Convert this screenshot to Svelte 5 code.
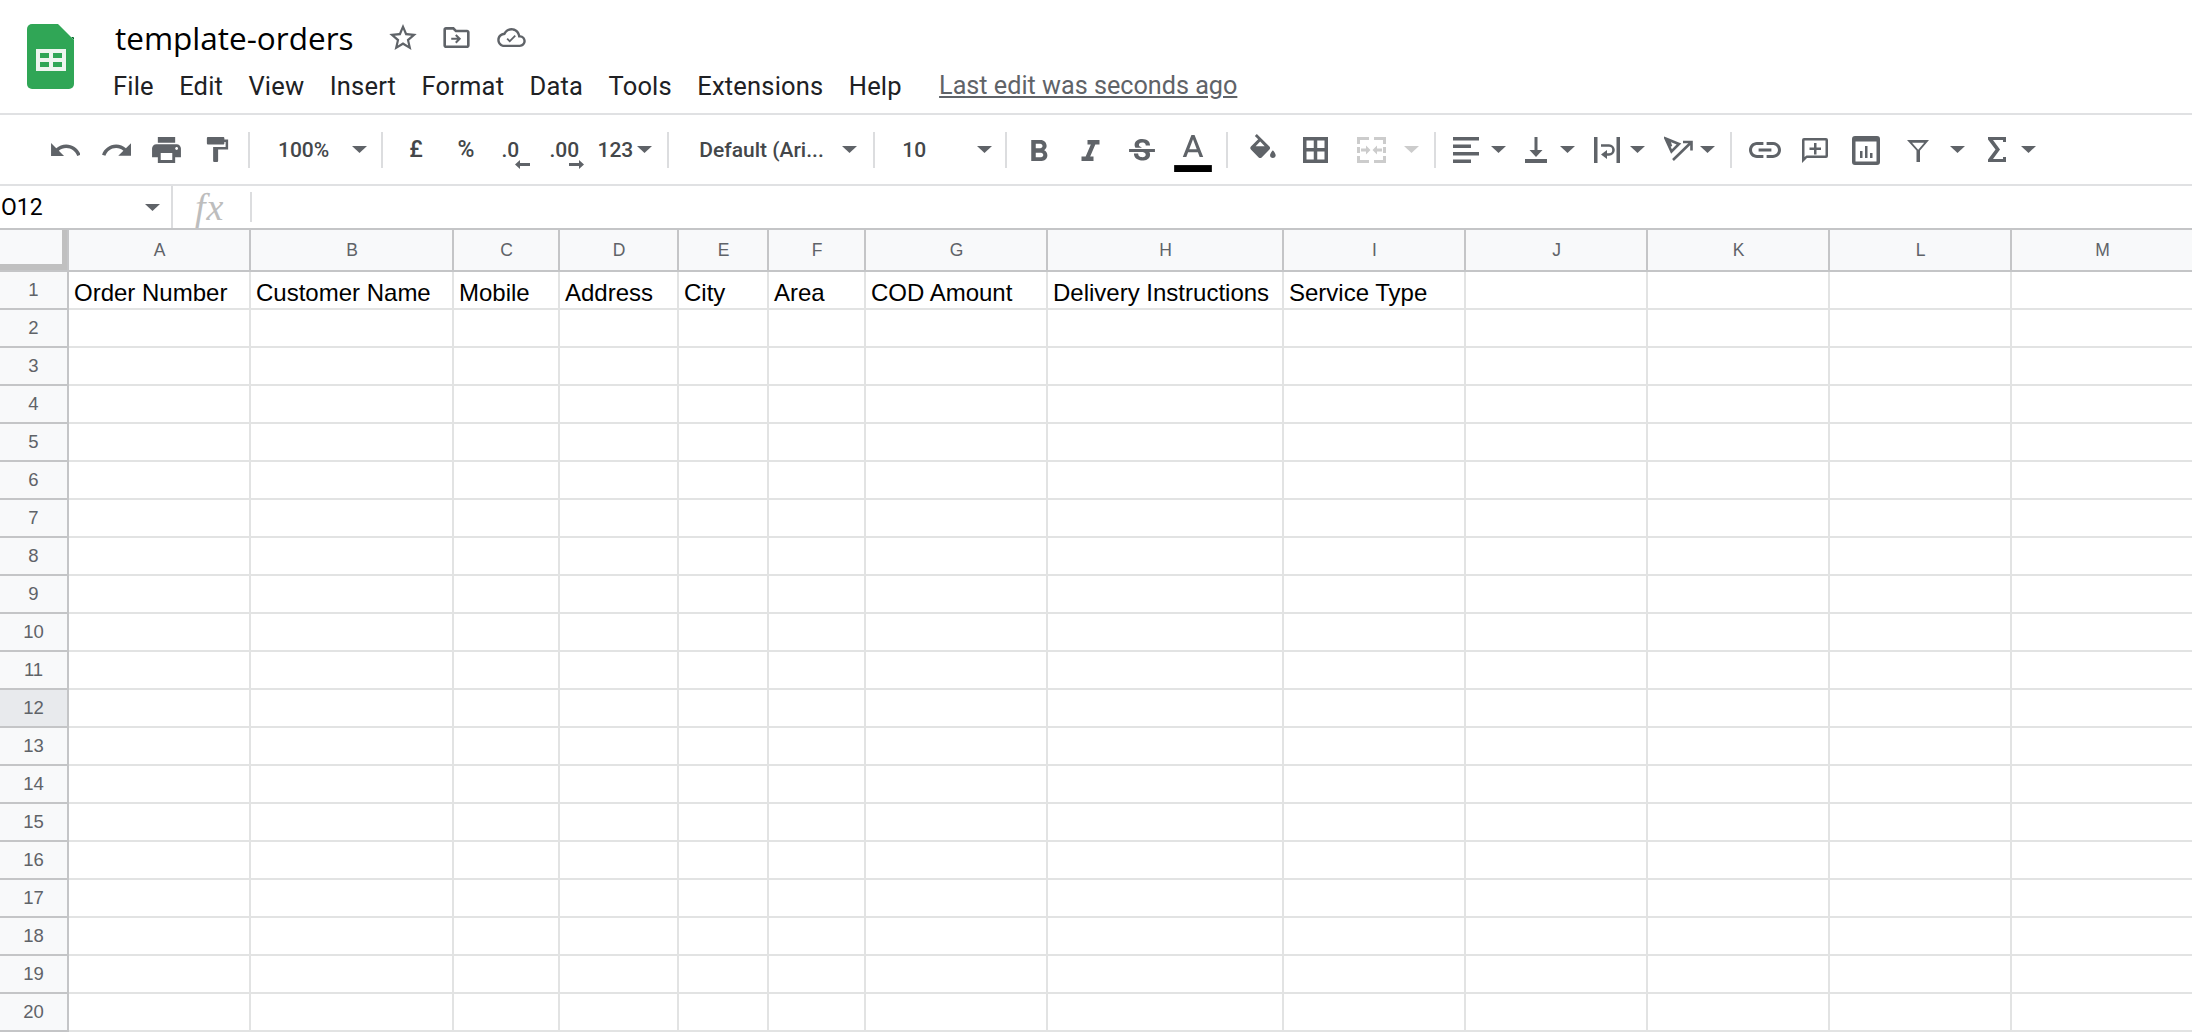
<script>
  const icons = {
    star: { vb: '2 2 20 19', w: 28, h: 26, d: 'M22 9.24l-7.19-.62L12 2 9.19 8.63 2 9.24l5.46 4.73L5.82 21 12 17.27 18.18 21l-1.63-7.03L22 9.24zM12 15.4l-3.76 2.27 1-4.28-3.32-2.88 4.38-.38L12 6.1l1.71 4.04 4.38.38-3.32 2.88 1 4.28L12 15.4z' },
    folder: { vb: '2 4 20 16', w: 27, h: 21, d: 'M20 6h-8l-2-2H4c-1.1 0-2 .9-2 2v12c0 1.1.9 2 2 2h16c1.1 0 2-.9 2-2V8c0-1.1-.9-2-2-2zm0 12H4V6h5.17l2 2H20v10zM12 9.5l-1.1 1.1 1.6 1.6H8v1.6h4.5l-1.6 1.6L12 16.5l3.5-3.5z' },
    cloud: { vb: '0 4 24 16', w: 29, h: 19, d: 'M19.35 10.04C18.67 6.59 15.64 4 12 4 9.11 4 6.6 5.64 5.35 8.04 2.34 8.36 0 10.91 0 14c0 3.31 2.69 6 6 6h13c2.76 0 5-2.24 5-5 0-2.64-2.05-4.78-4.65-4.96zM19 18H6c-2.21 0-4-1.79-4-4 0-2.05 1.53-3.76 3.56-3.97l1.07-.11.5-.95C8.08 7.14 9.94 6 12 6c2.62 0 4.88 1.86 5.39 4.43l.3 1.5 1.53.11c1.56.1 2.78 1.41 2.78 2.96 0 1.65-1.35 3-3 3zM10.5 16.2L7.8 13.5l1.06-1.06 1.64 1.64 4.14-4.14 1.06 1.06z' },
    undo: { vb: '2 7 20 9', w: 29, h: 13, d: 'M12.5 8c-2.65 0-5.05.99-6.9 2.6L2 7v9h9l-3.62-3.62c1.39-1.16 3.16-1.88 5.12-1.88 3.54 0 6.55 2.31 7.6 5.5l2.37-.78C21.08 11.03 17.15 8 12.5 8z' },
    redo: { vb: '1.5 7 20.5 9', w: 29, h: 13, d: 'M18.4 10.6C16.55 8.99 14.15 8 11.5 8c-4.65 0-8.58 3.03-9.96 7.22L3.9 16c1.05-3.19 4.05-5.5 7.6-5.5 1.95 0 3.73.72 5.12 1.88L13 16h9V7l-3.6 3.6z' },
    print: { vb: '2 3 20 18', w: 29, h: 26, d: 'M19 8H5c-1.66 0-3 1.34-3 3v6h4v4h12v-4h4v-6c0-1.66-1.34-3-3-3zm-3 11H8v-5h8v5zm3-7c-.55 0-1-.45-1-1s.45-1 1-1 1 .45 1 1-.45 1-1 1zm-1-9H6v4h12V3z' },
    paint: { vb: '4 2 17 20', w: 23, h: 25, d: 'M18 4V3c0-.55-.45-1-1-1H5c-.55 0-1 .45-1 1v4c0 .55.45 1 1 1h12c.55 0 1-.45 1-1V6h1v4H9v11c0 .55.45 1 1 1h2c.55 0 1-.45 1-1v-9h8V4h-3z' },
    bold: { vb: '7 4 11 14', w: 17, h: 21, dy: 1, d: 'M15.6 10.79c.97-.67 1.65-1.77 1.65-2.79 0-2.26-1.75-4-4-4H7v14h7.04c2.09 0 3.71-1.7 3.71-3.79 0-1.52-.86-2.82-2.15-3.42zM10 6.5h3c.83 0 1.5.67 1.5 1.5s-.67 1.5-1.5 1.5h-3v-3zm3.5 9H10v-3h3.5c.83 0 1.5.67 1.5 1.5s-.67 1.5-1.5 1.5z' },
    italic: { vb: '6 4 12 14', w: 21, h: 21, dy: 1, d: 'M10 4v3h2.21l-3.42 8H6v3h8v-3h-2.21l3.42-8H18V4z' },
    strike: { vb: '3 3 18 16', w: 26, h: 23, dy: 1, d: 'M6.85 7.08C6.85 4.37 9.45 3 12.24 3c1.64 0 3 .49 3.9 1.28.77.65 1.46 1.73 1.46 3.24h-3.01c0-.31-.05-.59-.15-.85-.29-.86-1.2-1.28-2.25-1.28-1.86 0-2.34 1.02-2.34 1.7 0 .48.25.88.74 1.21.38.25.77.48 1.41.7H7.39c-.21-.34-.54-.89-.54-1.92zM21 12v-2H3v2h9.62c1.15.45 1.96.75 1.96 1.97 0 1-.81 1.67-2.28 1.67-1.54 0-2.93-.54-2.93-2.51H6.4c0 .55.08 1.13.24 1.58.81 2.29 3.29 3.3 5.67 3.3 2.27 0 5.3-.89 5.3-4.05 0-.3-.01-1.16-.48-1.96H21z' },
    fill: { vb: '3 0 18 17', w: 26, h: 24, dy: -4, d: 'M16.56 8.94L7.62 0 6.21 1.41l2.38 2.38-5.15 5.15c-.59.59-.59 1.54 0 2.12l5.5 5.5c.29.29.68.44 1.06.44s.77-.15 1.06-.44l5.5-5.5c.59-.58.59-1.53 0-2.12zM6.8 8.6L10 5.4 13.2 8.6H6.8zM19 11.5s-2 2.17-2 3.5c0 1.1.9 2 2 2s2-.9 2-2c0-1.33-2-3.5-2-3.5z' },
    borders: { vb: '0 0 25 26', w: 25, h: 26, d: 'M0 0h25v26H0zM3.5 3.5v7.5h7.25V3.5zM14.25 3.5v7.5h7.25V3.5zM3.5 14.5v8h7.25v-8zM14.25 14.5v8h7.25v-8z' },
    merge: { vb: '0 0 29 26', w: 29, h: 26, dy: 0.5, off: true, d: 'M0 0h12v3H0zM0 3h3v4H0zM0 10h3v6H0zM0 19h3v4H0zM0 23h12v3H0zM17 0h12v3H17zM26 3h3v4h-3zM26 10h3v6h-3zM26 19h3v4h-3zM17 23h12v3H17zM4 11.5h5v-3l4.5 4.5L9 17.5v-3H4zM25 11.5h-5v-3L15.5 13l4.5 4.5v-3h5z' },
    align: { vb: '0 0 26 26', w: 26, h: 26, d: 'M0 0h26v3.5H0zM0 7.5h18V11H0zM0 15h26v3.5H0zM0 22.5h18V26H0z' },
    valign: { vb: '0 0 22 26', w: 22, h: 26, d: 'M0 22h22v4H0zM9.5 0h3v13h5l-6.5 7-6.5-7h5z' },
    link: { vb: '2 7 20 10', w: 32, h: 16, d: 'M3.9 12c0-1.71 1.39-3.1 3.1-3.1h4V7H7c-2.76 0-5 2.24-5 5s2.24 5 5 5h4v-1.9H7c-1.71 0-3.1-1.39-3.1-3.1zM8 13h8v-2H8v2zm9-6h-4v1.9h4c1.71 0 3.1 1.39 3.1 3.1s-1.39 3.1-3.1 3.1h-4V17h4c2.76 0 5-2.24 5-5s-2.24-5-5-5z' },
    comment: { vb: '0 0 26 25', w: 26, h: 25, dy: 0.5, d: 'M2 0h22a2 2 0 0 1 2 2v16a2 2 0 0 1-2 2H5l-5 5V2a2 2 0 0 1 2-2zM2.5 2.5V19l2-1.5h19v-15zM12 5h2.5v4.5H19V12h-4.5v4.5H12V12H7.5V9.5H12z' },
    chart: { vb: '0 0 28 29', w: 28, h: 29, dy: 1, d: 'M3 0h22a3 3 0 0 1 3 3v23a3 3 0 0 1-3 3H3a3 3 0 0 1-3-3V3a3 3 0 0 1 3-3zM3.5 5.5v20h21v-20zM8 15h2.5v7H8zM13 10h2.5v12H13zM18 17h2.5v5H18z' },
    filter: { vb: '0 0 22 22', w: 22, h: 22, dy: 1, d: 'M0 0h22L13 10.5V22H9.5V10.5zM5 2.8l6.2 7 6-7z' },
    sigma: { vb: '0 0 18 25', w: 18, h: 25, d: 'M0 0h18v5h-3V3H5l7 9.5L5 22h10v-2h3v5H0v-2.5L7.5 12.5 0 2.5z' }
  };

  const menus = ['File', 'Edit', 'View', 'Insert', 'Format', 'Data', 'Tools', 'Extensions', 'Help'];
  const columns = [
    ['A', 'Order Number'], ['B', 'Customer Name'], ['C', 'Mobile'], ['D', 'Address'], ['E', 'City'],
    ['F', 'Area'], ['G', 'COD Amount'], ['H', 'Delivery Instructions'], ['I', 'Service Type'],
    ['J', ''], ['K', ''], ['L', ''], ['M', '']
  ];
  const rows = Array.from({ length: 20 }, (_, i) => i + 1);
</script>

{#snippet icon(name)}
  {@const ic = icons[name]}
  <svg class:off={ic.off} viewBox={ic.vb} width={ic.w} height={ic.h} style="margin-top:{(ic.dy ?? 0) * 2}px">
    <path fill-rule="evenodd" d={ic.d} />
  </svg>
{/snippet}

{#snippet btn(name, w, ml = 0)}
  <div class="btn" style="width:{w}px;margin-left:{ml}px">{@render icon(name)}</div>
{/snippet}

{#snippet caret(ml = 0, off = false)}
  <svg class="caret" class:off viewBox="0 0 15 7" width="15" height="7" style="margin-left:{ml}px"><path d="M0 0h15L7.5 7z" /></svg>
{/snippet}

<div class="page">
  <header class="top">
    <svg class="logo" viewBox="0 0 47 65" width="47" height="65">
      <defs>
        <pattern id="dots" width="2" height="2" patternUnits="userSpaceOnUse">
          <rect width="2" height="2" fill="#2fa55a" />
          <rect width="1" height="1" fill="#14532d" />
          <rect x="1" y="1" width="1" height="1" fill="#14532d" />
        </pattern>
      </defs>
      <path fill="#30a656" d="M0 5a5 5 0 0 1 5-5h26l16 16v44a5 5 0 0 1-5 5H5a5 5 0 0 1-5-5z" />
      <path fill="url(#dots)" d="M31 0l16 16v-3H31z M31 0v13h13z" />
      <rect x="9" y="25" width="30" height="22" fill="#eef5ef" />
      <g fill="#30a656">
        <rect x="13" y="29" width="9" height="5" />
        <rect x="26" y="29" width="9" height="5" />
        <rect x="13" y="38" width="9" height="5" />
        <rect x="26" y="38" width="9" height="5" />
      </g>
    </svg>
    <div class="doc">
      <div class="title-row">
        <span class="title">template-orders</span>
        <span class="doc-icon star">{@render icon('star')}</span>
        <span class="doc-icon folder">{@render icon('folder')}</span>
        <span class="doc-icon cloud">{@render icon('cloud')}</span>
      </div>
      <nav class="menu">
        {#each menus as m}
          <span>{m}</span>
        {/each}
        <span class="last-edit">Last edit was seconds ago</span>
      </nav>
    </div>
  </header>

  <div class="toolbar">
    {@render btn('undo', 51, 40)}
    {@render btn('redo', 50)}
    {@render btn('print', 51)}
    {@render btn('paint', 51)}
    <div class="sep" style="margin-left:5px"></div>

    <div class="select zoom"><span>100%</span>{@render caret()}</div>
    <div class="sep"></div>

    <div class="btn txt sym" style="width:50px;margin-left:8px">£</div>
    <div class="btn txt sym" style="width:50px">%</div>
    <div class="dec dec-less">
      <span>.0</span>
      <svg viewBox="0 0 15 9" width="15" height="9"><path d="M0 4.5L5 0v3h10v3H5v3z" /></svg>
    </div>
    <div class="dec dec-more">
      <span>.00</span>
      <svg viewBox="0 0 15 9" width="15" height="9"><path d="M15 4.5L10 0v3H0v3h10v3z" /></svg>
    </div>
    <span class="txt num-format">123</span>{@render caret(4)}
    <div class="sep" style="margin-left:15px"></div>

    <div class="select font"><span>Default (Ari...</span>{@render caret()}</div>
    <div class="sep"></div>
    <div class="select size"><span>10</span>{@render caret()}</div>
    <div class="sep"></div>

    {@render btn('bold', 51, 7)}
    {@render btn('italic', 51)}
    {@render btn('strike', 51)}
    <div class="btn" style="width:51px">
      <svg class="text-color" viewBox="0 -1.5 24 28" width="38" height="44">
        <path d="M11 3L5.5 17h2.25l1.12-3h6.25l1.12 3h2.25L13 3h-2zm-1.38 9L12 5.67 14.38 12H9.62z" />
        <rect class="swatch" x="0" y="22.1" width="24" height="4.5" />
      </svg>
    </div>
    <div class="sep" style="margin-left:8px"></div>

    {@render btn('fill', 52, 9)}
    {@render btn('borders', 53)}
    {@render btn('merge', 59)}
    {@render caret(3, true)}
    <div class="sep" style="margin-left:15px"></div>

    {@render btn('align', 49, 5.5)}
    {@render caret()}
    {@render btn('valign', 48, 6.5)}
    {@render caret()}
    <div class="btn" style="width:46px;margin-left:9px">
      <svg class="line-icon" viewBox="0 0 26 26" width="26" height="26">
        <path class="solid" d="M0 0h3.5v26H0zM22.5 0H26v26h-3.5z" />
        <path d="M7 8.5h8a4.5 4.5 0 0 1 0 9h-3" />
        <path class="solid" d="M13 13l-6 4.5 6 4.5z" />
      </svg>
    </div>
    {@render caret()}
    <div class="btn" style="width:43px;margin-left:12px">
      <svg class="line-icon" viewBox="0 0 29 26" width="29" height="26" style="margin-top:-2px">
        <path d="M1.5 2.5L15 8l-7.5 7.5zM5 4.5l2 6" />
        <path d="M9 24L27 6.5M19 6h8.5v8.5" />
      </svg>
    </div>
    {@render caret()}
    <div class="sep" style="margin-left:15px"></div>

    {@render btn('link', 52, 7)}
    {@render btn('comment', 48)}
    {@render btn('chart', 54)}
    {@render btn('filter', 50)}
    {@render caret(7)}
    {@render btn('sigma', 48, 8)}
    {@render caret()}
  </div>

  <div class="formula">
    <div class="name-box"><span>O12</span>{@render caret()}</div>
    <div class="fx">fx</div>
    <div class="fx-sep"></div>
  </div>

  <div class="sheet">
    <div class="corner"></div>
    {#each columns as col}
      <div class="col-head">{col[0]}</div>
    {/each}
    {#each rows as r}
      <div class="row-head" class:current={r === 12}>{r}</div>
      {#each columns as col}
        <div class="cell">{r === 1 ? col[1] : ''}</div>
      {/each}
    {/each}
  </div>
</div>

<style>
  :global(body) {
    margin: 0;
    background: #fff;
    overflow: hidden;
  }

  .page {
    width: 2192px;
    height: 1033px;
    overflow: hidden;
    font-family: Roboto, 'Liberation Sans', sans-serif;
  }

  /* title + menus */
  .top {
    display: flex;
    height: 113px;
    border-bottom: 2px solid #e0e1e3;
    box-sizing: content-box;
  }

  .logo {
    margin: 24px 0 0 27px;
    flex: none;
  }

  .doc {
    margin-left: 39px;
  }

  .title-row {
    display: flex;
    align-items: center;
    height: 40px;
    margin-top: 17px;
    margin-left: 2px;
  }

  .title {
    font-family: 'Open Sans', sans-serif;
    font-size: 31.5px;
    color: #000;
  }

  .doc-icon {
    display: flex;
    fill: #5f6368;
  }

  .star { margin-left: 35px; }
  .folder { margin-left: 26px; }
  .cloud { margin-left: 27px; }

  .menu {
    display: flex;
    gap: 25.3px;
    margin-top: 13px;
    font-size: 25.5px;
    letter-spacing: 0.2px;
    line-height: 32px;
    color: #202124;
  }

  .last-edit {
    margin-left: 12px;
    font-size: 25.2px;
    letter-spacing: 0;
    color: #5f6368;
    text-decoration: underline;
  }

  /* toolbar */
  .toolbar {
    display: flex;
    align-items: center;
    height: 69px;
    border-bottom: 2px solid #e0e1e3;
    fill: #5f6368;
    font-size: 21px;
    color: #44474a;
    white-space: nowrap;
  }

  .btn {
    display: flex;
    flex: none;
    align-items: center;
    justify-content: center;
  }

  .off path {
    fill: #ccc;
  }

  .caret {
    flex: none;
  }

  .sep {
    flex: none;
    width: 2px;
    height: 36px;
    background: #dcdddf;
  }

  .select {
    display: flex;
    flex: none;
    align-items: center;
    justify-content: space-between;
    box-sizing: border-box;
    font-weight: 500;
  }

  .zoom { width: 131px; padding: 0 14px 0 28px; }
  .font { width: 204px; padding: 0 16px 0 30px; }
  .size { width: 130px; padding: 0 13px 0 27px; }

  .txt {
    font-weight: 500;
  }

  .sym {
    font-size: 23px;
  }

  .dec {
    display: flex;
    flex: none;
    flex-direction: column;
    align-items: flex-start;
    box-sizing: border-box;
    width: 50px;
    padding-top: 24px;
    height: 69px;
    font-weight: 500;
    line-height: 22px;
  }

  .dec svg {
    margin-top: -1px;
  }

  .dec-less { padding-left: 10.5px; }
  .dec-less svg { margin-left: 13px; }
  .dec-more { padding-left: 8.5px; }
  .dec-more svg { margin-left: 19px; }

  .num-format {
    margin-left: 6.5px;
  }

  .text-color .swatch {
    fill: #000;
  }

  .line-icon path {
    fill: none;
    stroke: #5f6368;
    stroke-width: 2.6;
  }

  .line-icon path.solid {
    fill: #5f6368;
    stroke: none;
  }

  /* formula bar */
  .formula {
    display: flex;
    align-items: center;
    height: 42px;
    fill: #5f6368;
  }

  .name-box {
    display: flex;
    flex: none;
    align-items: center;
    justify-content: space-between;
    box-sizing: border-box;
    width: 173px;
    height: 100%;
    padding: 0 11px 0 1px;
    border-right: 2px solid #dcdddf;
    font-size: 23px;
    color: #000;
  }

  .fx {
    flex: none;
    width: 77px;
    padding-left: 22px;
    box-sizing: border-box;
    font: italic 38px/42px 'Liberation Serif', serif;
    letter-spacing: 1px;
    color: #bdbdbd;
  }

  .fx-sep {
    width: 2px;
    height: 30px;
    background: #dcdddf;
  }

  /* grid */
  .sheet {
    display: grid;
    grid-template-columns: 69px 182px 203px 106px 119px 90px 97px 182px 236px 182px 182px 182px 182px 182px;
    grid-auto-rows: 38px;
    grid-template-rows: 44px;
    width: 2192px;
    overflow: hidden;
  }

  .sheet > div {
    box-sizing: border-box;
  }

  .corner,
  .col-head {
    background: #f8f9fa;
    border-top: 2px solid #c4c5c7;
    border-bottom: 2px solid #c4c5c7;
  }

  .corner {
    position: relative;
    border-right: 2px solid #c4c5c7;
  }

  .corner::after {
    content: '';
    position: absolute;
    right: 0;
    bottom: 0;
    width: 100%;
    height: 100%;
    box-sizing: border-box;
    border-right: 5px solid #c0c0c0;
    border-bottom: 6px solid #c0c0c0;
  }

  .col-head {
    display: flex;
    align-items: center;
    justify-content: center;
    padding-left: 1px;
    border-right: 2px solid #c4c5c7;
    font: 17.5px 'Liberation Sans', sans-serif;
    color: #5f6368;
  }

  .row-head {
    display: flex;
    align-items: center;
    justify-content: center;
    padding-bottom: 1px;
    background: #f8f9fa;
    border-right: 2px solid #c4c5c7;
    border-bottom: 2px solid #c4c5c7;
    font: 18.5px 'Liberation Sans', sans-serif;
    color: #5f6368;
  }

  .row-head.current {
    background: #e8eaed;
  }

  .cell {
    padding: 5px 0 0 5px;
    border-right: 2px solid #e2e3e3;
    border-bottom: 2px solid #e2e3e3;
    font: 24px/31px 'Liberation Sans', sans-serif;
    color: #000;
    white-space: nowrap;
  }
</style>
